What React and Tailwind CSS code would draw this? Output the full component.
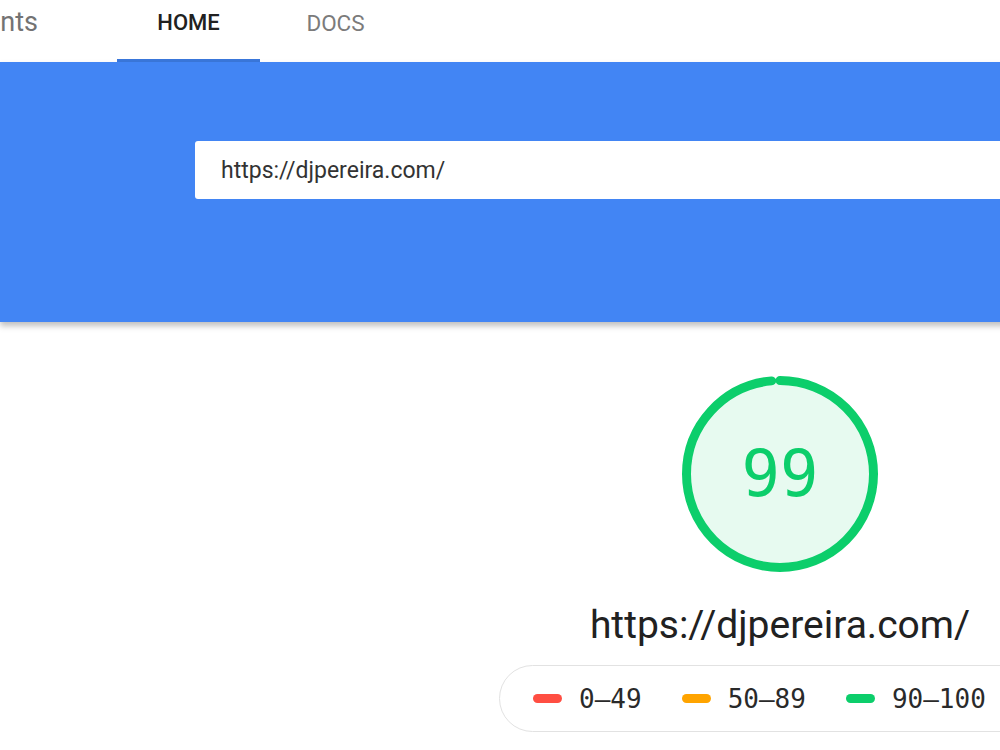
import React from 'react';

const ranges = [
  { label: '0–49', color: 'bg-[#ff4e42]' },
  { label: '50–89', color: 'bg-[#ffa400]' },
  { label: '90–100', color: 'bg-[#0cce6b]' },
];

const Gauge = ({ score }) => {
  const r = 93.5;
  const circ = 2 * Math.PI * r;
  return (
    <div className="relative w-[196px] h-[196px]">
      <svg width="196" height="196" viewBox="0 0 196 196" className="-rotate-90">
        <circle cx="98" cy="98" r={r} fill="#e7faf0" />
        <circle
          cx="98"
          cy="98"
          r={r}
          fill="none"
          stroke="#0cce6b"
          strokeWidth="9"
          strokeLinecap="round"
          strokeDasharray={`${circ - 9.5} ${circ}`}
        />
      </svg>
      <div className="absolute inset-0 flex items-center justify-center text-[64px] leading-none text-[#0cce6b] font-['DejaVu_Sans_Mono',monospace]">
        {score}
      </div>
    </div>
  );
};

export default function App() {
  return (
    <div className="w-[1000px] h-[750px] overflow-hidden bg-white font-['Roboto',sans-serif]">
      <nav className="h-[62px] flex bg-white">
        <div className="w-[40px] flex justify-end whitespace-nowrap pt-[5px] pr-[2px] text-[27px] leading-[34px] text-[#737373]">
          nts
        </div>
        <div className="ml-[77px] flex">
          <div className="w-[143px] flex flex-col items-center">
            <span className="pt-[12px] text-[22px] leading-[22px] font-medium text-[#212121]">HOME</span>
            <div className="flex-1" />
            <div className="w-full h-[3px] bg-[#3a77db]" />
          </div>
          <div className="w-[143px] flex flex-col items-center pl-[8px]">
            <span className="pt-[12px] text-[22.5px] leading-[22px] text-[#7b7b7b]">DOCS</span>
          </div>
        </div>
      </nav>

      <div className="w-[1560px]">
        <div className="relative z-10 h-[260px] bg-[#4285f4] pt-[79px] px-[195px] shadow-[0_4px_6px_rgba(0,0,0,0.25)]">
          <div className="h-[58px] bg-white rounded-[3px] flex items-center pl-[26px] pt-[2px] text-[23px] text-[#333]">
            https://djpereira.com/
          </div>
        </div>

        <div className="flex flex-col items-center pt-[54px]">
          <Gauge score={99} />
          <div className="mt-[30px] text-[39px] leading-[46px] text-[#212121]">https://djpereira.com/</div>
          <div className="mt-[17px] h-[67px] w-[562px] border border-[#e2e2e2] rounded-full flex items-center pl-[33px] gap-[40px]">
            {ranges.map((r) => (
              <div key={r.label} className="flex items-center gap-[17px]">
                <span className={`w-[29px] h-[9px] rounded-full ${r.color}`} />
                <span className="text-[26px] leading-none text-[#2a2a2a] font-['DejaVu_Sans_Mono',monospace]">{r.label}</span>
              </div>
            ))}
          </div>
        </div>
      </div>
    </div>
  );
}
